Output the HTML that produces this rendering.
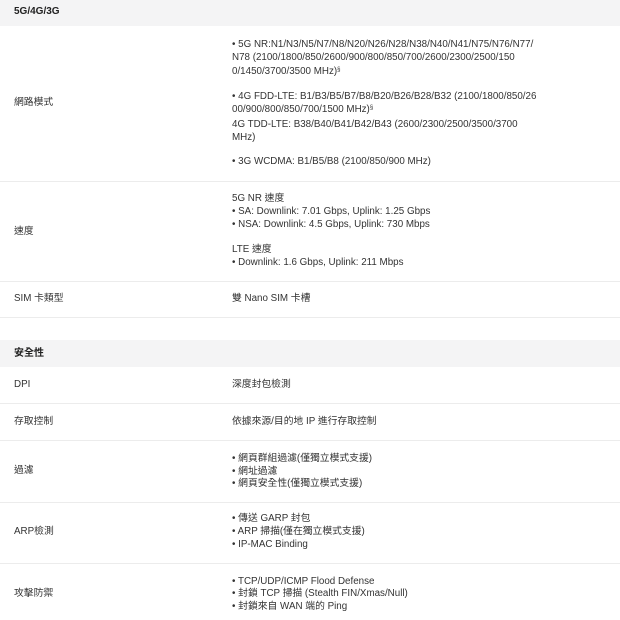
<!DOCTYPE html>
<html><head><meta charset="utf-8"><style>
html,body{margin:0;padding:0;width:620px;height:620px;overflow:hidden;background:#fff;}
body{position:relative;font-family:"Liberation Sans","Noto Sans CJK TC",sans-serif;font-size:9.8px;color:#333;letter-spacing:0;}
.t{position:absolute;white-space:nowrap;line-height:12px;}
.h{position:absolute;left:0;width:620px;background:#f4f4f5;}
.hl{position:absolute;left:0;width:620px;height:1px;background:#ececec;}
.b{font-weight:bold;color:#222;font-size:10px;}
sup{font-size:6px;vertical-align:top;position:relative;top:-2px;}
</style></head><body>
<div class="h" style="top:0;height:26px"></div>
<div class="t b" style="left:14px;top:6px">5G/4G/3G</div>

<div class="t" style="left:14px;top:97px">網路模式</div>
<div class="t" style="left:232px;top:39px">• 5G NR:N1/N3/N5/N7/N8/N20/N26/N28/N38/N40/N41/N75/N76/N77/</div>
<div class="t" style="left:232px;top:52px">N78 (2100/1800/850/2600/900/800/850/700/2600/2300/2500/150</div>
<div class="t" style="left:232px;top:66px">0/1450/3700/3500 MHz)<sup>§</sup></div>
<div class="t" style="left:232px;top:91px">• 4G FDD-LTE: B1/B3/B5/B7/B8/B20/B26/B28/B32 (2100/1800/850/26</div>
<div class="t" style="left:232px;top:104px">00/900/800/850/700/1500 MHz)<sup>§</sup></div>
<div class="t" style="left:232px;top:119px">4G TDD-LTE: B38/B40/B41/B42/B43 (2600/2300/2500/3500/3700</div>
<div class="t" style="left:232px;top:132px">MHz)</div>
<div class="t" style="left:232px;top:156px">• 3G WCDMA: B1/B5/B8 (2100/850/900 MHz)</div>
<div class="hl" style="top:181px"></div>

<div class="t" style="left:14px;top:226px">速度</div>
<div class="t" style="left:232px;top:193px">5G NR 速度</div>
<div class="t" style="left:232px;top:206px">• SA: Downlink: 7.01 Gbps, Uplink: 1.25 Gbps</div>
<div class="t" style="left:232px;top:219px">• NSA: Downlink: 4.5 Gbps, Uplink: 730 Mbps</div>
<div class="t" style="left:232px;top:244px">LTE 速度</div>
<div class="t" style="left:232px;top:257px">• Downlink: 1.6 Gbps, Uplink: 211 Mbps</div>
<div class="hl" style="top:281px"></div>

<div class="t" style="left:14px;top:293px">SIM 卡類型</div>
<div class="t" style="left:232px;top:293px">雙 Nano SIM 卡槽</div>
<div class="hl" style="top:317px"></div>

<div class="h" style="top:340px;height:27px"></div>
<div class="t b" style="left:14px;top:348px">安全性</div>

<div class="t" style="left:14px;top:379px">DPI</div>
<div class="t" style="left:232px;top:379px">深度封包檢測</div>
<div class="hl" style="top:403px"></div>

<div class="t" style="left:14px;top:416px">存取控制</div>
<div class="t" style="left:232px;top:416px">依據來源/目的地 IP 進行存取控制</div>
<div class="hl" style="top:440px"></div>

<div class="t" style="left:14px;top:465px">過濾</div>
<div class="t" style="left:232px;top:453px">• 網頁群組過濾(僅獨立模式支援)</div>
<div class="t" style="left:232px;top:466px">• 網址過濾</div>
<div class="t" style="left:232px;top:478px">• 網頁安全性(僅獨立模式支援)</div>
<div class="hl" style="top:502px"></div>

<div class="t" style="left:14px;top:526px">ARP檢測</div>
<div class="t" style="left:232px;top:513px">• 傳送 GARP 封包</div>
<div class="t" style="left:232px;top:526px">• ARP 掃描(僅在獨立模式支援)</div>
<div class="t" style="left:232px;top:539px">• IP-MAC Binding</div>
<div class="hl" style="top:563px"></div>

<div class="t" style="left:14px;top:588px">攻擊防禦</div>
<div class="t" style="left:232px;top:576px">• TCP/UDP/ICMP Flood Defense</div>
<div class="t" style="left:232px;top:588px">• 封鎖 TCP 掃描 (Stealth FIN/Xmas/Null)</div>
<div class="t" style="left:232px;top:601px">• 封鎖來自 WAN 端的 Ping</div>
</body></html>
